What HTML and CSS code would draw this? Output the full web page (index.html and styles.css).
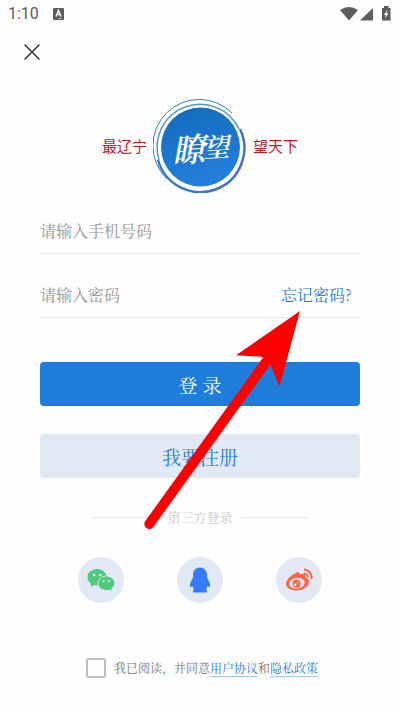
FILE: index.html
```html
<!DOCTYPE html>
<html lang="zh-CN">
<head>
<meta charset="utf-8">
<meta name="viewport" content="width=device-width, initial-scale=1">
<title>登录</title>
<link rel="stylesheet" href="styles.css">
</head>
<body>
<div class="status">
  <span class="clock">1:10</span>
  <svg class="app-badge" width="11" height="12" viewBox="0 0 11 12" aria-hidden="true"><rect width="11" height="12" rx="1" fill="#5c5c5c"/><path d="M3 8.500 5.500 2.500 8 8.500M4 6.500H7" fill="none" stroke="#fff" stroke-width="1.500"/><path d="M5 10.500H9" stroke="#aaa"/></svg>
  <svg class="signals" width="52" height="16" viewBox="0 0 52 16" aria-hidden="true">
    <path d="M0 4Q9-2 18 4L9 14.500Z" fill="#5c5c5c"/>
    <path d="M20 14.500 33 2V14.500Z" fill="#5c5c5c"/>
    <path d="M42 2H44V0H48.500V2H50.500V14.500H42Z" fill="#5c5c5c"/>
    <path d="M47.500 3.500 44 9H46L45 12.500 48.500 7.500H46.500Z" fill="#fff"/>
  </svg>
</div>
<header class="top">
  <button class="close" type="button" aria-label="关闭">
    <svg width="16" height="16" viewBox="0 0 16 16"><path d="M1 1 15 15M15 1 1 15" stroke="#333" stroke-width="1.500" stroke-linecap="round"/></svg>
  </button>
</header>
<main class="page">
  <div class="brand">
    <span>最辽宁</span>
    <svg class="logo" width="94" height="94" viewBox="0 0 94 94" role="img" aria-label="瞭望">
      <defs>
        <linearGradient id="disc" x1="0" y1="0" x2="0.300" y2="1"><stop offset="0" stop-color="#126cba"/><stop offset="1" stop-color="#217edb"/></linearGradient>
        <linearGradient id="ring" x1="0" y1="0" x2="1" y2="0"><stop offset="0" stop-color="#2d7fd0"/><stop offset="1" stop-color="#4a6cc6"/></linearGradient>
      </defs>
      <circle cx="47.500" cy="48" r="39.500" fill="url(#disc)"/>
      <g fill="none">
        <path d="M13.500 79.500A46 46 0 0 1 79 14" stroke="#2d83b8" stroke-width="1"/>
        <path d="M6 61A43 43 0 0 1 86 30" stroke="#4e98cc" stroke-width="1.500"/>
        <path d="M87 30A44 44 0 1 1 5 61" stroke="url(#ring)" stroke-width="2.500"/>
      </g>
      <text class="logo-name" transform="rotate(-4 47 48)"><tspan x="19" y="62" font-size="33">瞭</tspan><tspan x="50" y="59" font-size="26">望</tspan></text>
    </svg>
    <span>望天下</span>
  </div>
  <form class="form">
    <div class="field">
      <input type="tel" placeholder="请输入手机号码" aria-label="手机号码">
    </div>
    <div class="field">
      <input type="password" placeholder="请输入密码" aria-label="密码">
      <a class="forgot" href="#">忘记密码?</a>
    </div>
    <button class="btn primary" type="submit">登 录</button>
    <button class="btn secondary" type="button">我要注册</button>
  </form>
  <div class="divider">第三方登录</div>
  <div class="social">
    <button type="button" aria-label="微信登录">
      <svg width="30" height="26" viewBox="0 0 30 26">
        <path d="M11 2C5.500 2 1.500 5.700 1.500 10.300c0 2.700 1.500 4.900 3.700 6.400L4.300 20l3.900-2c1 .3 2 .4 3 .4 5.500 0 9.500-3.700 9.500-8.200S16.500 2 11 2Z" fill="#4dcb7d"/>
        <path d="M20.300 9c-4.600 0-8.300 3.200-8.300 7.300s3.700 7.200 8.300 7.200c1 0 1.900-.1 2.700-.4l3.300 1.700-.8-2.900c1.900-1.300 3.200-3.300 3.200-5.600C28.700 12.200 24.900 9 20.300 9Z" fill="#4dcb7d" stroke="#e2e8f4" stroke-width="1"/>
        <g fill="#e2e8f4"><circle cx="8" cy="8" r="1.300"/><circle cx="14.300" cy="8" r="1.300"/><circle cx="17.700" cy="14" r="1.100"/><circle cx="23" cy="14" r="1.100"/></g>
      </svg>
    </button>
    <button type="button" aria-label="QQ登录">
      <svg width="22" height="26" viewBox="0 0 22 26"><path d="M11 .5C6.500.5 4 3.800 4 8v2.500C2.500 13 1 16 1 18.500c0 2.500.8 2 2.200.2.300 1.300 1 2.500 2 3.500C3.500 23 3.500 25.500 5 25.500H17c1.500 0 1.500-2.500-.2-3.300 1-1 1.700-2.200 2-3.500 1.400 1.800 2.200 2.300 2.200-.2 0-2.500-1.500-5.500-3-8V8C18 3.800 15.500.5 11 .5Z" fill="#347bfb"/></svg>
    </button>
    <button type="button" aria-label="微博登录">
      <svg width="28" height="26" viewBox="0 0 28 26">
        <path d="M10 6.500C12.500 4 15 4.500 14.300 7.500 18 6 21.500 6.500 20.300 10.500 23 11.300 24.500 13 24 15.500 23 20 17.500 23.500 12 23.500 6 23.500 1 21 1 17 1 13 5.500 8.500 10 6.500Z" fill="#fd6449"/>
        <ellipse cx="12" cy="16.200" rx="7.800" ry="5.300" fill="#e2e8f4" transform="rotate(-8 12 16.200)"/>
        <circle cx="11.500" cy="16.700" r="4" fill="#fd6449"/>
        <circle cx="10.200" cy="17.800" r="1.400" fill="#e2e8f4"/><circle cx="12.700" cy="15.800" r=".7" fill="#e2e8f4"/>
        <path d="M19 2.500A8 8 0 0 1 26.500 12M19 6.500A4 4 0 0 1 22.800 10.500" fill="none" stroke="#fd6449" stroke-width="2"/>
      </svg>
    </button>
  </div>
  <div class="agree">
    <input id="agree" type="checkbox">
    <label for="agree">我已阅读，并同意<a href="#">用户协议</a>和<a href="#">隐私政策</a></label>
  </div>
</main>
<svg class="pointer" width="160" height="224" viewBox="0 0 160 224" aria-hidden="true">
  <path d="M7.300 216 124 54" stroke="#fe0000" stroke-width="10" stroke-linecap="round"/>
  <path d="M158 3 94 47.300 119.500 48.700 127.500 54.500 137.500 78.500Z" fill="#fe0000"/>
</svg>
</body>
</html>
```
FILE: styles.css
```css
* {
  box-sizing: border-box;
}

body {
  position: relative;
  margin: 0;
  background: #fefefe;
  color: #777;
  font-family: "Noto Serif CJK SC", "Noto Sans CJK SC", serif;
  font-weight: 400;
}

button,
input {
  font: inherit;
}

button {
  padding: 0;
  border: 0;
  cursor: pointer;
}

a {
  color: #1e7ddb;
  text-decoration: none;
}

svg {
  display: block;
}

.status {
  display: flex;
  align-items: center;
  height: 28px;
  padding: 0 8px;
}

.clock {
  color: #5c5c5c;
  font: 400 16px/20px Roboto, sans-serif;
}

.app-badge {
  margin-left: 14px;
}

.signals {
  margin-left: auto;
}

.top {
  display: flex;
  align-items: center;
  height: 48px;
  padding: 0 24px;
}

.close {
  background: none;
}

.page {
  padding: 24px 40px;
}

.brand {
  display: flex;
  align-items: center;
  justify-content: center;
  gap: 6px;
  height: 92px;
  color: #c9161e;
  font: 400 15px/20px "Noto Sans CJK SC", sans-serif;
}

.logo-name {
  fill: #fff;
  font-family: "Noto Serif CJK SC", serif;
  font-style: italic;
  font-weight: 600;
}

.field {
  display: flex;
  align-items: center;
  height: 46px;
  margin-top: 18px;
  border-bottom: 1px solid #e9e9e9;
  font-size: 16px;
}

.field:first-child {
  margin-top: 16px;
}

.field input {
  flex: 1;
  min-width: 0;
  padding: 0;
  border: 0;
  outline: 0;
  background: none;
  color: #333;
}

.field input::placeholder {
  color: #989898;
  opacity: 1;
}

.forgot {
  padding-right: 8px;
}

.btn {
  display: block;
  width: 100%;
  height: 44px;
  border-radius: 4px;
  font-size: 19px;
}

.primary {
  margin-top: 44px;
  background: #1e7ddb;
  color: #fff;
}

.secondary {
  margin-top: 28px;
  background: #e2e8f4;
  color: #1e7ddb;
}

.divider {
  display: flex;
  align-items: center;
  gap: 8px;
  margin: 28px 52px 0;
  color: #c8c8c8;
  font-size: 13px;
  line-height: 22px;
}

.divider::before,
.divider::after {
  content: "";
  flex: 1;
  height: 1px;
  background: #e9e9e9;
}

.social {
  display: flex;
  justify-content: space-between;
  margin: 29px 38px 0;
}

.social button {
  display: grid;
  place-items: center;
  width: 46px;
  height: 46px;
  border-radius: 50%;
  background: #e2e8f4;
}

.agree {
  display: flex;
  align-items: center;
  justify-content: center;
  gap: 8px;
  margin-top: 55px;
  padding-left: 4px;
  font-size: 12px;
  line-height: 16px;
}

.agree input {
  appearance: none;
  width: 20px;
  height: 20px;
  margin: 0;
  border: 2px solid #bebebe;
  border-radius: 2px;
}

.agree input:checked {
  background: #1e7ddb;
}

.agree a {
  border-bottom: 1px solid #a5cbf1;
}

.pointer {
  position: absolute;
  top: 308px;
  left: calc(50% - 58px);
  pointer-events: none;
}
```
